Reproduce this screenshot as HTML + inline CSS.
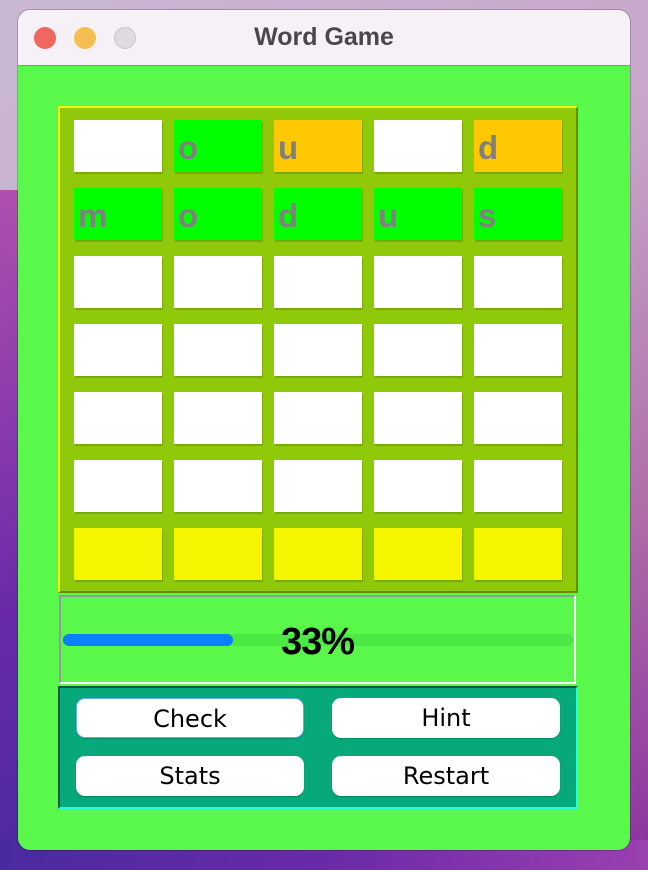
<!DOCTYPE html>
<html><head><style>
*{margin:0;padding:0;box-sizing:border-box}
body{width:648px;height:870px;overflow:hidden;position:relative;background:linear-gradient(135deg,#c9b8d4 0%,#c7a6c9 50%,#b070a8 75%,#8a2fa0 100%);font-family:"Liberation Sans",sans-serif}
.bg2{position:absolute;left:0;top:190px;width:60px;height:680px;background:linear-gradient(160deg,#b050b0,#6a2aa8 60%,#4a2aa0)}
.bot{position:absolute;left:0;top:840px;width:648px;height:30px;background:linear-gradient(90deg,#4a2aa0,#6a2aa8 50%,#9a40b0)}
.win{position:absolute;left:18px;top:10px;width:612px;height:840px;border-radius:12px;overflow:hidden;background:#5af84b;box-shadow:0 0 0 1px rgba(0,0,0,.2)}
.tb{height:56px;background:#f6f1f6;border-bottom:1px solid #3cc83a;position:relative}
.tb h1{position:absolute;left:0;right:0;top:13px;text-align:center;font-size:25px;font-weight:bold;color:#4a464c}
.dot{position:absolute;top:17px;width:22px;height:22px;border-radius:50%}
.board{position:absolute;left:40px;top:96px;width:520px;height:487px;background:#90c80a;border-top:2px solid #f0ff00;border-left:2px solid #f0ff00;border-right:2px solid #6a8a00;border-bottom:2px solid #6a8a00}
.c{position:absolute;width:88px;height:52px;background:#fff;font-weight:bold;font-size:33px;color:#808080;padding-left:4px;line-height:56px;box-shadow:1px 2px 0 #7aaa08}
.g{background:#00ff00}.o{background:#ffc800}.y{background:#f5f500}
.prog{position:absolute;left:41px;top:585px;width:517px;height:89px;border:2px solid #fff;border-left-color:#999;border-top-color:#999}
.track{position:absolute;left:2px;top:37px;width:510px;height:12px;border-radius:6px;background:#4ce844}
.fill{position:absolute;left:2px;top:37px;width:170px;height:12px;border-radius:6px;background:#0a80ff}
.pct{position:absolute;left:0;right:0;top:24px;text-align:center;font-size:38px;font-weight:bold;color:#000;letter-spacing:-1px}
.btns{position:absolute;left:40px;top:676px;width:520px;height:123px;background:#07a97a;border:2px solid #0a5a40;border-right-color:#20ffe0;border-bottom-color:#20ffe0}
.b{position:absolute;width:228px;height:40px;background:#fff;border-radius:9px;text-align:center;font-size:24px;line-height:40px;color:#000;font-family:"DejaVu Sans","Liberation Sans",sans-serif;box-shadow:0 1px 1px rgba(0,0,0,.2)}
</style></head><body>
<div class="bg2"></div><div class="bot"></div>
<div class="win">
<div class="tb"><div class="dot" style="left:16px;background:#f0675e"></div><div class="dot" style="left:56px;background:#f5be50"></div><div class="dot" style="left:96px;background:#dedadf;border:1px solid #c8c4c8"></div><h1>Word Game</h1></div>
<div class="board">
<div class="c" style="left:14px;top:12px"></div><div class="c g" style="left:114px;top:12px">o</div><div class="c o" style="left:214px;top:12px">u</div><div class="c" style="left:314px;top:12px"></div><div class="c o" style="left:414px;top:12px">d</div>
<div class="c g" style="left:14px;top:80px">m</div><div class="c g" style="left:114px;top:80px">o</div><div class="c g" style="left:214px;top:80px">d</div><div class="c g" style="left:314px;top:80px">u</div><div class="c g" style="left:414px;top:80px">s</div>
<div class="c" style="left:14px;top:148px"></div><div class="c" style="left:114px;top:148px"></div><div class="c" style="left:214px;top:148px"></div><div class="c" style="left:314px;top:148px"></div><div class="c" style="left:414px;top:148px"></div>
<div class="c" style="left:14px;top:216px"></div><div class="c" style="left:114px;top:216px"></div><div class="c" style="left:214px;top:216px"></div><div class="c" style="left:314px;top:216px"></div><div class="c" style="left:414px;top:216px"></div>
<div class="c" style="left:14px;top:284px"></div><div class="c" style="left:114px;top:284px"></div><div class="c" style="left:214px;top:284px"></div><div class="c" style="left:314px;top:284px"></div><div class="c" style="left:414px;top:284px"></div>
<div class="c" style="left:14px;top:352px"></div><div class="c" style="left:114px;top:352px"></div><div class="c" style="left:214px;top:352px"></div><div class="c" style="left:314px;top:352px"></div><div class="c" style="left:414px;top:352px"></div>
<div class="c y" style="left:14px;top:420px"></div><div class="c y" style="left:114px;top:420px"></div><div class="c y" style="left:214px;top:420px"></div><div class="c y" style="left:314px;top:420px"></div><div class="c y" style="left:414px;top:420px"></div>
</div>
<div class="prog"><div class="track"></div><div class="fill"></div><div class="pct">33%</div></div>
<div class="btns">
<div class="b" style="left:16px;top:10px;border:1.5px solid #6aa8f0">Check</div>
<div class="b" style="left:272px;top:10px">Hint</div>
<div class="b" style="left:16px;top:68px">Stats</div>
<div class="b" style="left:272px;top:68px">Restart</div>
</div>
</div>
</body></html>
